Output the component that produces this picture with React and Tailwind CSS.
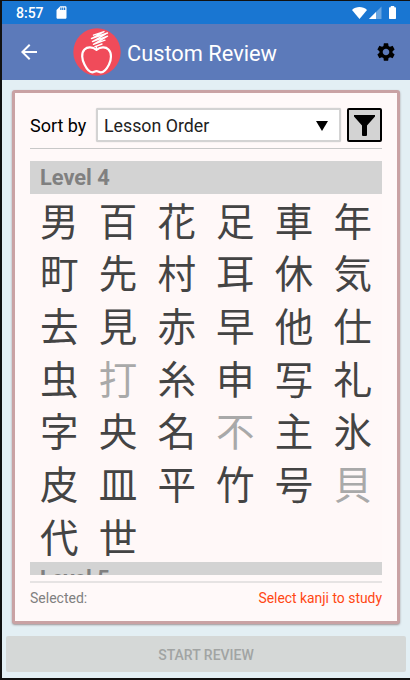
import { MdArrowBack, MdSettings, MdSdCard } from 'react-icons/md';

const LEVEL = [
  '男百花足車年',
  '町先村耳休気',
  '去見赤早他仕',
  '虫打糸申写礼',
  '字央名不主氷',
  '皮皿平竹号貝',
  '代世',
];

const LOCKED = ['打', '不', '貝'];

const StatusBar = () => (
  <div className="h-[23px] shrink-0 bg-[#1976d2] flex items-center text-white pl-[14px] pr-[14px]">
    <span className="text-[14px] leading-none font-medium mt-[1px] w-[38px]">8:57</span>
    <MdSdCard className="w-[15px] h-[15px]" />
    <svg className="ml-auto w-[15px] h-[12px]" viewBox="0 0 15 13" preserveAspectRatio="none" fill="currentColor">
      <path d="M7.5 13L0 3.2C4.2-.9 10.8-.9 15 3.2z" />
    </svg>
    <svg className="ml-[2px] w-[13px] h-[13px]" viewBox="0 0 13 13" fill="currentColor">
      <path d="M0 13L12.5 0.5V13z" opacity=".35" />
      <path d="M0 13L7 6V13z" />
    </svg>
    <svg className="ml-[7px] w-[7px] h-[13px]" viewBox="0 0 8 13" preserveAspectRatio="none" fill="currentColor">
      <path d="M2 0h4v1.3h1.2q.8 0 .8.8V12.2q0 .8-.8.8H.8q-.8 0-.8-.8V2.1q0-.8.8-.8H2z" />
    </svg>
  </div>
);

const Logo = () => (
  <svg className="ml-[32px] w-12 h-12 shrink-0" viewBox="0 0 48 48" fill="none" stroke="#fff" strokeLinecap="round" strokeLinejoin="round">
    <circle cx="24" cy="24" r="23.7" fill="#f04b5a" stroke="none" />
    <path
      strokeWidth="2.2"
      d="M23.5 21.8C19.5 18.9 14.5 18.5 11.5 21.5C8 25 8.9 31.5 11.5 36.5C13.5 40.5 15.8 44.3 19.2 44.3C21 44.3 21.6 43.2 23.5 43.2C25.4 43.2 26 44.3 27.9 44.3C31.5 44.3 34 40.5 36 36.5C38.4 31.5 39 25 35.5 21.5C32.5 18.5 27.5 18.9 23.5 21.8z"
    />
    <path strokeWidth="1.4" d="M20.5 7.2L31 3.6M18.5 10.5L34.5 5M19.5 13.6L34.5 8.2M20.5 16.3L32 12.2M22 18.6L29 16M31 3.6L18.5 10.5M34.5 5L19.5 13.6M34.5 8.2L20.5 16.3M23.5 21.5V18.5" />
  </svg>
);

const Header = () => (
  <header className="h-14 shrink-0 bg-[#5c7aba] flex items-center text-white pl-[15px] pr-[13px]">
    <MdArrowBack className="w-6 h-6 shrink-0" />
    <Logo />
    <h1 className="ml-[6px] mt-[3px] text-[21.8px] leading-none whitespace-nowrap">Custom Review</h1>
    <MdSettings className="ml-auto w-[22px] h-[22px] shrink-0 text-black" />
  </header>
);

const LevelTitle = ({ children }) => (
  <div className="h-[32.5px] bg-[#d3d3d3] pl-[10px] pt-px flex items-center text-[21.8px] leading-none font-bold text-[#808080]">
    {children}
  </div>
);

const App = () => {
  return (
    <div className="h-[680px] w-[410px] overflow-hidden bg-[#111] pl-[2px] pt-px pb-[2px] font-[Roboto,'Noto_Sans_CJK_JP',sans-serif]">
      <div className="h-full flex flex-col bg-[#e3eff4]">
        <StatusBar />
        <Header />

        <main className="mt-[10px] ml-[10px] mr-[10px] h-[534px] shrink-0 rounded-[3px] border-[3px] border-[#c9a2a4] bg-[#fff9f9] shadow-[0_1px_2px_rgba(90,60,60,0.5)] px-[15px] flex flex-col">
          <div className="mt-[15px] h-[34px] flex items-center">
            <span className="w-[66px] pt-[2px] text-[18px] leading-none text-black">Sort by</span>
            <div className="w-[245px] h-[34px] border-2 border-[#d3d3d3] rounded-[2px] bg-white flex items-center justify-between pl-[6px] pr-[11px] shadow-[0_0_1px_#bbb]">
              <span className="pt-[2px] text-[17.8px] leading-none text-[#222]">Lesson Order</span>
              <svg className="w-[12px] h-[10px] mt-px" viewBox="0 0 12 10">
                <path d="M0 0h12L6 10z" />
              </svg>
            </div>
            <button className="ml-auto w-[35px] h-[34px] rounded-[2px] border-2 border-black bg-[#d3d3d3] flex items-center justify-center">
              <svg className="w-[21px] h-[21px]" viewBox="0 0 21 21">
                <path d="M0 0h21v1.5L13 10.5v9.5q0 1-1 1H9q-1 0-1-1v-9.5L0 1.5z" />
              </svg>
            </button>
          </div>
          <div className="mt-[6px] h-px bg-[#c8c8c8]" />

          {/* Kanji list, the next level is cut off */}
          <div className="mt-[12px] h-[414px] overflow-hidden bg-[#fff8f8]">
            <LevelTitle>Level 4</LevelTitle>
            <div className="grid grid-cols-6 auto-rows-[52.7px]">
              {LEVEL.join('').split('').map((kanji) => (
                <div
                  key={kanji}
                  className={`flex items-center justify-center pt-[6px] text-[38.5px] leading-none ${LOCKED.includes(kanji) ? 'text-[#a9a9a9]' : 'text-[#444]'}`}
                >
                  {kanji}
                </div>
              ))}
            </div>
            <LevelTitle>Level 5</LevelTitle>
          </div>

          <div className="mt-[6px] h-[2px] bg-[#e6e3e3]" />
          <div className="mt-[7px] flex justify-between text-[14px] leading-[16px]">
            <span className="text-[#808080]">Selected:</span>
            <span className="text-[13.9px] text-[#ff4713]">Select kanji to study</span>
          </div>
        </main>

        <button className="mt-[12px] ml-[4px] mr-[4px] pt-[2px] h-9 shrink-0 rounded-[2px] bg-[#d5d8d7] text-[14px] font-medium text-[#a1a4a3]">
          START REVIEW
        </button>
      </div>
    </div>
  );
};

export default App;
